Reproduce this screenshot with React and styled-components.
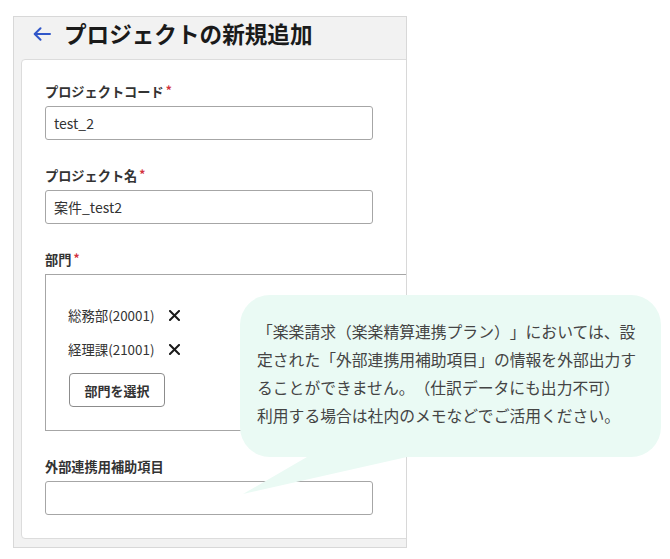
import React from "react";
import styled, { createGlobalStyle } from "styled-components";

const GlobalStyle = createGlobalStyle`
  body {
    margin: 0;
    background: #ffffff;
    font-family: "Noto Sans CJK JP", "Noto Sans", sans-serif;
    color: #333333;
  }
`;

const departments = [
  { name: "総務部", code: "20001" },
  { name: "経理課", code: "21001" },
];

function BackArrow() {
  return (
    <svg width="18" height="14" viewBox="0 0 18 14" fill="none">
      <path
        d="M17 7H2M7.5 1.2L1.7 7l5.8 5.8"
        stroke="#3157c9"
        strokeWidth="2"
        strokeLinecap="round"
        strokeLinejoin="round"
      />
    </svg>
  );
}

function CloseMark() {
  return (
    <svg width="11" height="11" viewBox="0 0 11 11">
      <path
        d="M1 1l9 9M10 1l-9 9"
        stroke="#1a1a1a"
        strokeWidth="2"
        strokeLinecap="square"
      />
    </svg>
  );
}

function Field({ label, required, children }) {
  return (
    <FieldBlock>
      <Label>
        {label}
        {required && <Required>*</Required>}
      </Label>
      {children}
    </FieldBlock>
  );
}

function App() {
  return (
    <>
      <GlobalStyle />
      <Page>
        <Frame>
          <Header>
            <BackButton type="button">
              <BackArrow />
            </BackButton>
            <Title>プロジェクトの新規追加</Title>
          </Header>
          <Card>
            <Field label="プロジェクトコード" required>
              <TextInput defaultValue="test_2" />
            </Field>
            <Field label="プロジェクト名" required>
              <TextInput defaultValue="案件_test2" />
            </Field>
            <Field label="部門" required>
              <SelectBox>
                {departments.map((d) => (
                  <DeptItem key={d.code}>
                    <span>
                      {d.name}({d.code})
                    </span>
                    <RemoveButton type="button">
                      <CloseMark />
                    </RemoveButton>
                  </DeptItem>
                ))}
                <SelectButton type="button">部門を選択</SelectButton>
              </SelectBox>
            </Field>
            <Field label="外部連携用補助項目">
              <TextInput defaultValue="" />
            </Field>
          </Card>
        </Frame>

        <Balloon>
          「楽楽請求（楽楽精算連携プラン）」においては、設
          <br />
          定された「外部連携用補助項目」の情報を外部出力す
          <br />
          ることができません。（仕訳データにも出力不可）
          <br />
          利用する場合は社内のメモなどでご活用ください。
          <BalloonTail viewBox="0 0 200 45" width="200" height="45">
            <polygon points="79,0 198,0 3,44" fill="#eafaf4" />
          </BalloonTail>
        </Balloon>
      </Page>
    </>
  );
}

const Page = styled.div`
  position: relative;
  width: 670px;
  height: 559px;
  padding: 16px 0 0 13px;
  box-sizing: border-box;
  overflow: hidden;
`;

const Frame = styled.div`
  width: 394px;
  height: 532px;
  box-sizing: border-box;
  background: #f2f2f2;
  border: 1px solid #d8d8d8;
  overflow: hidden;
  display: flex;
  flex-direction: column;
`;

const Header = styled.div`
  height: 42px;
  flex-shrink: 0;
  display: flex;
  align-items: center;
  padding: 0 0 8px 19px;
  box-sizing: border-box;
  gap: 13px;
`;

const BackButton = styled.button`
  border: none;
  background: none;
  padding: 0;
  display: flex;
  cursor: pointer;
`;

const Title = styled.h1`
  margin: 0;
  font-size: 22.6px;
  font-weight: 700;
  color: #1a1a1a;
  line-height: 1;
`;

const Card = styled.div`
  width: 440px;
  height: 480px;
  flex-shrink: 0;
  margin-left: 7px;
  box-sizing: border-box;
  background: #ffffff;
  border: 1px solid #dcdcdc;
  border-radius: 4px;
  padding: 23px 0 0 23px;
`;

const FieldBlock = styled.div`
  margin-bottom: 27px;
`;

const Label = styled.div`
  font-size: 13.2px;
  font-weight: 700;
  line-height: 18px;
  height: 18px;
  color: #333333;
  margin-bottom: 5px;
`;

const Required = styled.span`
  color: #d3323c;
  font-size: 12px;
  line-height: 0;
  margin-left: 2px;
  vertical-align: 2px;
`;

const TextInput = styled.input`
  display: block;
  width: 328px;
  height: 34px;
  box-sizing: border-box;
  border: 1px solid #a6a6a6;
  border-radius: 3px;
  padding: 0 8px;
  font-family: "Noto Sans CJK JP", "Noto Sans", sans-serif;
  font-size: 14px;
  color: #333333;
  outline: none;
`;

const SelectBox = styled.div`
  width: 400px;
  height: 157px;
  box-sizing: border-box;
  border: 1px solid #a6a6a6;
  padding: 23px 0 0 22px;
  display: flex;
  flex-direction: column;
  align-items: flex-start;
`;

const DeptItem = styled.div`
  height: 34px;
  display: flex;
  align-items: center;
  gap: 15px;
  font-size: 13.4px;
  color: #333333;
`;

const RemoveButton = styled.button`
  border: none;
  background: none;
  padding: 0;
  display: flex;
  cursor: pointer;
`;

const SelectButton = styled.button`
  margin-top: 7px;
  margin-left: 1px;
  width: 96px;
  height: 34px;
  background: #ffffff;
  border: 1px solid #8c8c8c;
  border-radius: 4px;
  font-family: "Noto Sans CJK JP", "Noto Sans", sans-serif;
  font-size: 13px;
  font-weight: 700;
  color: #333333;
  cursor: pointer;
`;

const Balloon = styled.div`
  position: absolute;
  left: 240px;
  top: 295px;
  width: 421px;
  height: 162px;
  box-sizing: border-box;
  background: #eafaf4;
  border-radius: 30px;
  padding: 23px 0 0 17px;
  font-size: 15.8px;
  line-height: 28px;
  color: #444444;
  white-space: nowrap;
  text-spacing-trim: space-all;
`;

const BalloonTail = styled.svg`
  position: absolute;
  left: 0;
  top: 155px;
  overflow: visible;
`;

export default App;
